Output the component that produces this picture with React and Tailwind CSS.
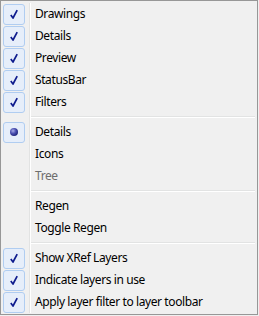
import React from "react";

const groups = [
  [
    { label: "Drawings", mark: "check" },
    { label: "Details", mark: "check" },
    { label: "Preview", mark: "check" },
    { label: "StatusBar", mark: "check" },
    { label: "Filters", mark: "check" },
  ],
  [
    { label: "Details", mark: "radio" },
    { label: "Icons" },
    { label: "Tree", disabled: true },
  ],
  [{ label: "Regen" }, { label: "Toggle Regen" }],
  [
    { label: "Show XRef Layers", mark: "check" },
    { label: "Indicate layers in use", mark: "check" },
    { label: "Apply layer filter to layer toolbar", mark: "check" },
  ],
];

function CheckMark() {
  return (
    <svg width="10" height="11" viewBox="0 0 10 11">
      <path d="M1.8 6 L4 9 L8.2 1.2" fill="none" stroke="#0f1c8e" strokeWidth="1.7" strokeLinejoin="round" />
    </svg>
  );
}

function RadioMark() {
  return (
    <svg width="10" height="10" viewBox="0 0 10 10">
      <defs>
        <radialGradient id="rg" cx="0.38" cy="0.35" r="0.7">
          <stop offset="0" stopColor="#a9ace8" />
          <stop offset="0.5" stopColor="#4a4fb0" />
          <stop offset="1" stopColor="#1c2176" />
        </radialGradient>
      </defs>
      <circle cx="5" cy="5" r="4" fill="url(#rg)" />
    </svg>
  );
}

function Gutter({ children }) {
  return (
    <div className="w-[29px] shrink-0 pl-[2px] border-r border-[#e2e3e3] flex items-center">
      {children}
    </div>
  );
}

function MenuRow({ item }) {
  return (
    <div className="flex h-[22px]">
      <Gutter>
        {item.mark && (
          <div className="w-[22px] h-[21px] rounded-[3px] border border-[#b0cdf1] bg-[#e6eefa] flex items-center justify-center">
            {item.mark === "check" ? <CheckMark /> : <RadioMark />}
          </div>
        )}
      </Gutter>
      <div
        className={`flex-1 border-l border-white pl-[4px] flex items-center ${
          item.disabled ? "text-[#6d6d6d]" : "text-black"
        }`}
      >
        {item.label}
      </div>
    </div>
  );
}

function Separator() {
  return (
    <div className="flex h-[8px]">
      <Gutter />
      <div className="flex-1 border-l border-white pt-[3px] pr-[2px]">
        <div className="h-px bg-[#e2e3e3]" />
        <div className="h-px bg-white" />
      </div>
    </div>
  );
}

export default function App() {
  return (
    <div className="w-[259px] h-[316px] bg-[#f0f0f0]">
      <div
        className="w-[258px] border border-[#979797] bg-[#f0f0f0] pt-[2px] pb-px text-[12px] leading-none tracking-[-0.4px]"
        style={{ fontFamily: '"Noto Sans", "Open Sans", sans-serif' }}
      >
        {groups.map((group, gi) => (
          <div key={gi}>
            {gi > 0 && <Separator />}
            {group.map((item, i) => (
              <MenuRow key={i} item={item} />
            ))}
          </div>
        ))}
      </div>
    </div>
  );
}
